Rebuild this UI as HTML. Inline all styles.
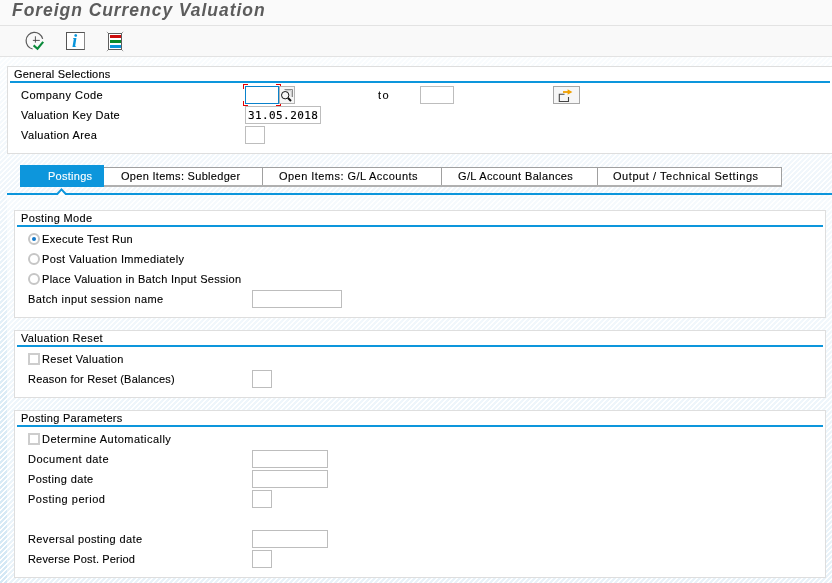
<!DOCTYPE html>
<html lang="en"><head><meta charset="utf-8"><title>Foreign Currency Valuation</title>
<style>
html,body{margin:0;padding:0}
body{width:832px;height:583px;overflow:hidden;position:relative;font-family:"Liberation Sans", Arial, sans-serif;font-size:11px;color:#000;background:#fff}
.abs,.t,.inp,.panel,.bl,.radio,.chk,.sbtn,.mbtn,.tabA,.tabs,.sep,.focus,.mono,.inner,.outer,.hdr,.tb,.ln,.title,.ic{position:absolute;box-sizing:content-box}

.outer{left:0;top:57px;width:832px;height:526px;
 background-image:linear-gradient(135deg,#fff 0,#fff 14%,rgba(255,255,255,0) 14%,rgba(255,255,255,0) 50%,#fff 50%,#fff 64%,rgba(255,255,255,0) 64%),linear-gradient(to bottom,#f9fcfe 0,#f0f6fb 25%,#dcecf6 63%,#d4e8f5 100%);
 background-size:5px 5px,100% 100%;background-position:-2px 0,0 0}
.inner{background-image:linear-gradient(135deg,#fff 0,#fff 14%,rgba(255,255,255,0) 14%,rgba(255,255,255,0) 50%,#fff 50%,#fff 64%,rgba(255,255,255,0) 64%),linear-gradient(to bottom,#f6fafd,#e8f2f9);
 background-size:5px 5px,100% 100%;background-position:-2px 0,0 0}
.hdr{left:0;top:0;width:832px;height:25px;background:#fafafa}
.tb{left:0;top:26px;width:832px;height:30px;background:#f9f9f9}
.ln{left:0;width:832px;height:1px;background:#e3e3e3}
.title{left:12px;top:-2.5px;font-size:17.5px;font-weight:bold;font-style:italic;color:#5c5c5c;letter-spacing:0.95px;white-space:nowrap;line-height:24px}
.t{white-space:nowrap;line-height:14px;height:14px;-webkit-text-stroke:0.12px #000}
.t.w{-webkit-text-stroke:0.12px #fff}
.t,.title,.mono,.ii{will-change:transform}
.t.w{color:#fff}
.panel{background:#fff;border:1px solid #dedede}
.bl{height:2px;background:#0d96dc}
.inp{height:16px;background:#fff;border:1px solid #bdbdbd}
.inp.act{border-color:#0a82cc}
.focus{width:38px;height:22px;background:
 linear-gradient(#e60000,#e60000) 0 0/5px 1px no-repeat,linear-gradient(#e60000,#e60000) 0 0/1px 5px no-repeat,
 linear-gradient(#e60000,#e60000) 100% 0/5px 1px no-repeat,linear-gradient(#e60000,#e60000) 100% 0/1px 5px no-repeat,
 linear-gradient(#e60000,#e60000) 0 100%/5px 1px no-repeat,linear-gradient(#e60000,#e60000) 0 100%/1px 5px no-repeat,
 linear-gradient(#e60000,#e60000) 100% 100%/5px 1px no-repeat,linear-gradient(#e60000,#e60000) 100% 100%/1px 5px no-repeat}
.sbtn{width:14px;height:16px;border:1px solid #b4b4b4;background:#f6f6f6}
.mbtn{width:25px;height:16px;border:1px solid #a6a6a6;background:#f6f6f6}
.sbtn svg,.mbtn svg{display:block}
.mono{font-family:"DejaVu Sans Mono","Liberation Mono",monospace;font-size:11px;line-height:16px;letter-spacing:0.4px;color:#000;white-space:nowrap;-webkit-text-stroke:0.15px #000}
.tabA{height:22px;background:#0d96dc}
.tabs{height:17px;background:#fff;border-top:1px solid #a0a0a0;border-bottom:2px solid #b0b0b0;border-right:1px solid #a0a0a0;width:676px}
.sep{width:1px;height:17px;background:#a0a0a0}
.radio{width:8px;height:8px;border:2px solid #c6c6c6;border-radius:50%;background:#fff}
.radio i{position:absolute;left:2px;top:2px;width:4px;height:4px;border-radius:50%;background:#1579c9}
.chk{width:8px;height:8px;border:2px solid #cdcdcd;background:#fff}
</style></head><body>
<div class="outer"></div>
<div class="hdr"></div><div class="ln" style="top:25px"></div>
<div class="tb"></div><div class="ln" style="top:56px"></div>
<div class="title">Foreign Currency Valuation</div>
<svg class="abs" style="left:24px;top:30px" width="22" height="22" viewBox="0 0 22 22"><path d="M18.65 8.77A8.4 8.4 0 1 0 8.61 18.98" fill="none" stroke="#5a5a5a" stroke-width="1.2"/><path d="M8.9 10.4H15.8M11.4 6.3V12.7" stroke="#444" stroke-width="0.9" fill="none"/><path d="M9.6 15.4L13.5 18.7L19.2 11.8" fill="none" stroke="#0a8a3a" stroke-width="2.1"/></svg>
<div class="ic" style="left:66px;top:32px;width:17px;height:16px;border:1px solid #555;border-right:1.5px solid #888;background:#fff"></div>
<span class="abs ii" style="left:72px;top:30px;font-family:'Liberation Serif','DejaVu Serif',serif;font-style:italic;font-weight:bold;font-size:18.7px;line-height:22px;color:#0a96dc">i</span>
<div class="ic" style="left:108px;top:33px;width:12px;height:15px;border:1px solid #5e5e5e;background:#fff"></div>
<svg class="abs" style="left:105px;top:30px" width="20" height="23" viewBox="0 0 20 23"><path d="M3 3L1.8 1.8M17 3L18.2 1.8M3 20L1.8 21.2M17 20L18.2 21.2" stroke="#888" stroke-width="0.8" fill="none"/></svg>
<div class="ic" style="left:110px;top:35px;width:10.5px;height:3px;background:#cc0c0c"></div>
<div class="ic" style="left:110px;top:40px;width:10.5px;height:3px;background:#0a8a2a"></div>
<div class="ic" style="left:110px;top:45px;width:10.5px;height:3px;background:#0a96dc"></div>
<div class="panel" style="left:7px;top:66px;width:824px;height:86px"></div><div class="bl" style="left:10px;top:81px;width:820px"></div><span class="t " style="left:14px;top:67px;letter-spacing:0.192px;">General Selections</span>
<span class="t " style="left:21px;top:88px;letter-spacing:0.481px;">Company Code</span>
<span class="t " style="left:21px;top:108px;letter-spacing:0.31px;">Valuation Key Date</span>
<span class="t " style="left:21px;top:128px;letter-spacing:0.398px;">Valuation Area</span>
<div class="focus" style="left:243px;top:84px"></div>
<div class="inp act" style="left:245px;top:86px;width:32px"></div>
<div class="sbtn" style="left:279px;top:86px"><svg width="14" height="16" viewBox="0 0 14 16"><path d="M4.5 2.5H12.5V10" fill="none" stroke="#8a8a8a" stroke-width="1"/><path d="M5.5 3.7H11.3V10" fill="none" stroke="#c4c4c4" stroke-width="1"/><circle cx="5.2" cy="8.2" r="3.7" fill="none" stroke="#111" stroke-width="1"/><path d="M8 11L11 14" stroke="#111" stroke-width="2" stroke-linecap="butt"/></svg></div>
<span class="t " style="left:378px;top:88px;letter-spacing:1.444px;">to</span>
<div class="inp " style="left:420px;top:86px;width:32px"></div>
<div class="mbtn" style="left:553px;top:86px"><svg width="25" height="16" viewBox="0 0 25 16"><path d="M10.5 7.3H5.3V14.5H14.5V10" fill="none" stroke="#444" stroke-width="1.1"/><path d="M9 5H15" stroke="#f0a000" stroke-width="1.8" fill="none"/><path d="M13.6 2.3L18.4 5L13.6 7.7Z" fill="#f0a000"/></svg></div>
<div class="inp " style="left:245px;top:106px;width:74px"></div>
<span class="mono" style="left:248px;top:108px">31.05.2018</span>
<div class="inp " style="left:245px;top:126px;width:18px"></div>
<div class="tabA" style="left:20px;top:165px;width:84px"></div>
<span class="t w" style="left:47.5px;top:169px;letter-spacing:0.259px;">Postings</span>
<div class="tabs" style="left:104px;top:167px;width:677px"></div>
<span class="t " style="left:120.5px;top:169px;letter-spacing:0.302px;">Open Items: Subledger</span>
<div class="sep" style="left:262px;top:168px"></div>
<span class="t " style="left:279.3px;top:169px;letter-spacing:0.456px;">Open Items: G/L Accounts</span>
<div class="sep" style="left:441px;top:168px"></div>
<span class="t " style="left:458px;top:169px;letter-spacing:0.364px;">G/L Account Balances</span>
<div class="sep" style="left:597px;top:168px"></div>
<span class="t " style="left:613.3px;top:169px;letter-spacing:0.554px;">Output / Technical Settings</span>
<div class="bl" style="left:7px;top:193px;width:825px"></div>
<svg class="abs" style="left:55px;top:187px" width="14" height="8" viewBox="0 0 14 8"><path d="M1.4 8L6.5 2.2L11.6 8Z" fill="#fff"/><path d="M0 7H2.3L6.5 2.4L10.7 7H14" fill="none" stroke="#0d96dc" stroke-width="2" stroke-linejoin="miter"/></svg>
<div class="inner" style="left:7px;top:195px;width:825px;height:388px"></div>
<div class="panel" style="left:14px;top:210px;width:810px;height:106px"></div><div class="bl" style="left:17px;top:225px;width:806px"></div><span class="t " style="left:21px;top:211px;letter-spacing:0.35px;">Posting Mode</span>
<div class="radio" style="left:28px;top:233px"><i></i></div>
<span class="t " style="left:42.3px;top:231.5px;letter-spacing:0.314px;">Execute Test Run</span>
<div class="radio" style="left:28px;top:253px"></div>
<span class="t " style="left:42.3px;top:251.5px;letter-spacing:0.381px;">Post Valuation Immediately</span>
<div class="radio" style="left:28px;top:273px"></div>
<span class="t " style="left:42.3px;top:271.5px;letter-spacing:0.297px;">Place Valuation in Batch Input Session</span>
<span class="t " style="left:28.4px;top:291.5px;letter-spacing:0.398px;">Batch input session name</span>
<div class="inp " style="left:252px;top:290px;width:88px"></div>
<div class="panel" style="left:14px;top:330px;width:810px;height:66px"></div><div class="bl" style="left:17px;top:345px;width:806px"></div><span class="t " style="left:21px;top:331px;letter-spacing:0.344px;">Valuation Reset</span>
<div class="chk" style="left:28px;top:353px"></div>
<span class="t " style="left:42.3px;top:351.5px;letter-spacing:0.327px;">Reset Valuation</span>
<span class="t " style="left:28.4px;top:371.5px;letter-spacing:0.209px;">Reason for Reset (Balances)</span>
<div class="inp " style="left:252px;top:370px;width:18px"></div>
<div class="panel" style="left:14px;top:410px;width:810px;height:166px"></div><div class="bl" style="left:17px;top:425px;width:806px"></div><span class="t " style="left:21px;top:411px;letter-spacing:0.271px;">Posting Parameters</span>
<div class="chk" style="left:28px;top:433px"></div>
<span class="t " style="left:42.3px;top:431.5px;letter-spacing:0.463px;">Determine Automatically</span>
<span class="t " style="left:28.4px;top:451.5px;letter-spacing:0.493px;">Document date</span>
<div class="inp " style="left:252px;top:450px;width:74px"></div>
<span class="t " style="left:28.4px;top:471.5px;letter-spacing:0.369px;">Posting date</span>
<div class="inp " style="left:252px;top:470px;width:74px"></div>
<span class="t " style="left:28.4px;top:491.5px;letter-spacing:0.507px;">Posting period</span>
<div class="inp " style="left:252px;top:490px;width:18px"></div>
<span class="t " style="left:28.4px;top:531.5px;letter-spacing:0.386px;">Reversal posting date</span>
<div class="inp " style="left:252px;top:530px;width:74px"></div>
<span class="t " style="left:28.4px;top:551.5px;letter-spacing:0.157px;">Reverse Post. Period</span>
<div class="inp " style="left:252px;top:550px;width:18px"></div>
</body></html>
